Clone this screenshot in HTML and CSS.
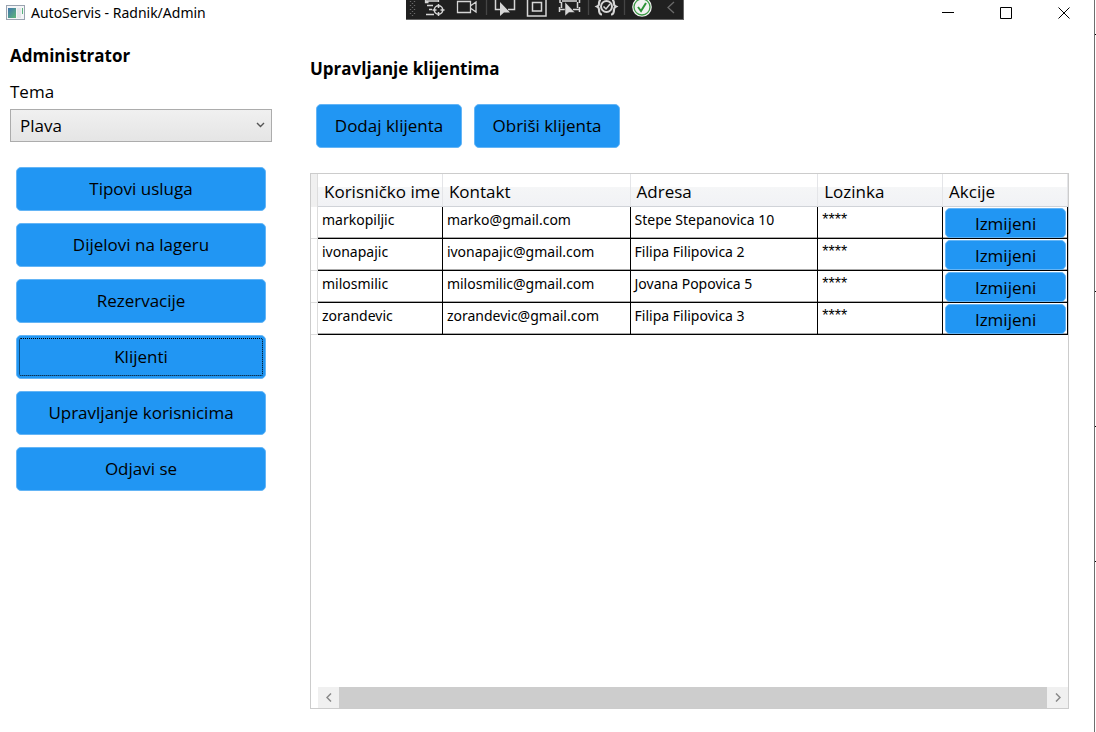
FILE: index.html
```html
<!DOCTYPE html>
<html lang="bs">
<head>
<meta charset="utf-8">
<meta name="viewport" content="width=device-width, initial-scale=1">
<title>AutoServis - Radnik/Admin</title>
<link rel="stylesheet" href="styles.css">
</head>
<body>
<div class="window">
  <header class="titlebar">
    <svg class="app-icon" width="19" height="15" viewBox="0 0 19 15" aria-hidden="true">
      <defs><linearGradient id="pane" x1="0" y1="0" x2="1" y2="1"><stop offset="0" stop-color="#3f74ae"/><stop offset="1" stop-color="#5fb878"/></linearGradient></defs>
      <rect x=".5" y=".5" width="18" height="14" fill="#f4f5f7" stroke="#9aa3b0"/>
      <rect x="2" y="3" width="8" height="10" fill="url(#pane)"/>
      <rect x="11" y="3" width="4" height="10" fill="#e4e6ea"/>
      <rect x="16" y="3" width="1" height="6" fill="#58b47c"/>
    </svg>
    <h1 class="app-title">AutoServis - Radnik/Admin</h1>
    <div class="window-buttons">
      <button type="button" aria-label="Minimiziraj"><svg width="12" height="12" viewBox="0 0 12 12"><path d="M0 5.500h12"/></svg></button>
      <button type="button" aria-label="Maksimiziraj"><svg width="12" height="12" viewBox="0 0 12 12"><path d="M.5.500h11v11H.5z"/></svg></button>
      <button type="button" aria-label="Zatvori"><svg width="12" height="12" viewBox="0 0 12 12"><path d="M.5.500l11 11M11.500.500l-11 11"/></svg></button>
    </div>
  </header>

  <div class="debug-bar" aria-hidden="true">
    <svg width="277" height="19" viewBox="0 0 277 19" fill="none" stroke="#d6d6d6" stroke-width="1.300">
      <path d="M4.500 1v16M8.500 1v16" stroke="#6a6a6a" stroke-dasharray="1 3"/>
      <path d="M6.500 3v14" stroke="#6a6a6a" stroke-dasharray="1 3"/>
      <path d="M19.500 0v2.500h3M19.500 1h13M21 5.500h6M23 9.500h3M20 14.500h8M32.500 0v2"/>
      <circle cx="32.500" cy="10" r="4.200" stroke-width="1.500"/><path d="M32.500 4v4M32.500 12v4M26.500 10h4M34.500 10h4" stroke-width="1.500"/>
      <path d="M51.500 1.500h13v11h-13zM65 5.500l5-3.500v10l-5-3.500"/>
      <path d="M80.500 0v15M182.500 0v15M218.500 0v15" stroke="#454545"/>
      <path d="M94 9.500h-4.500V0M102 9.500h6.500V0" stroke-width="1.500"/>
      <path d="M94 2v14l4-3.500h6z" fill="#d6d6d6" stroke="none"/>
      <path d="M121.500 -2h18.500v18h-18.500zM126.500 2.500h9v8.500h-9z" stroke-width="1.500"/>
      <path d="M156 1h15M154 0v3M173.500 0v3M155.500 2v6M171.500 2v6M153 9.500h6M153.500 7v5M167 9.500h7M173.500 7v5" stroke-width="1.500"/>
      <path d="M159 2v14l4-3.500h6z" fill="#d6d6d6" stroke="#202020" stroke-width=".5"/>
      <circle cx="200.500" cy="6.500" r="5.500" stroke-width="2"/>
      <path d="M197.500 6.500l2.500 2.500 4-5" stroke-width="1.500"/>
      <path d="M195 0c-2 0-2 2-2 4s-1 2-2 2.500c1 .5 2 1 2 3 0 3 1 5 3 5M206 0c2 0 2 2 2 4s1 2 2 2.500c-1 .5-2 1-2 3 0 3-1 5-3 5" stroke-width="2.200"/>
      <circle cx="236" cy="7" r="9.800" fill="#f2f2f2" stroke="none"/>
      <circle cx="236" cy="7" r="8" stroke="#3c9b45" stroke-width="1.300"/>
      <path d="M232 7l3 4 5-8" stroke="#2d9237" stroke-width="2"/>
      <path d="M268 2l-6 5.500 6 5.500" stroke="#6a6a6a"/>
    </svg>
  </div>

  <div class="content">
    <aside class="sidebar">
      <h2 class="heading">Administrator</h2>
      <label class="theme-label" for="theme">Tema</label>
      <div class="select-box">
        <select id="theme"><option>Plava</option></select>
        <svg class="chevron" width="9" height="6" viewBox="0 0 9 6" aria-hidden="true"><path d="M1 1l3.500 3.500L8 1"/></svg>
      </div>
      <nav class="menu">
        <button type="button" class="btn">Tipovi usluga</button>
        <button type="button" class="btn">Dijelovi na lageru</button>
        <button type="button" class="btn">Rezervacije</button>
        <button type="button" class="btn current">Klijenti</button>
        <button type="button" class="btn">Upravljanje korisnicima</button>
        <button type="button" class="btn">Odjavi se</button>
      </nav>
    </aside>

    <main class="main">
      <h2 class="heading">Upravljanje klijentima</h2>
      <div class="actions">
        <button type="button" class="btn">Dodaj klijenta</button>
        <button type="button" class="btn">Obriši klijenta</button>
      </div>
      <section class="grid">
        <table class="clients">
          <colgroup><col class="c-handle"><col class="c-short"><col class="c-long"><col class="c-long"><col class="c-short"><col class="c-short"></colgroup>
          <thead>
            <tr><td class="handle"></td><th scope="col">Korisničko ime</th><th scope="col">Kontakt</th><th scope="col">Adresa</th><th scope="col">Lozinka</th><th scope="col">Akcije</th></tr>
          </thead>
          <tbody>
            <tr><td class="handle"></td><td>markopiljic</td><td>marko@gmail.com</td><td>Stepe Stepanovica 10</td><td class="secret">****</td><td class="action"><button type="button" class="btn edit">Izmijeni</button></td></tr>
            <tr><td class="handle"></td><td>ivonapajic</td><td>ivonapajic@gmail.com</td><td>Filipa Filipovica 2</td><td class="secret">****</td><td class="action"><button type="button" class="btn edit">Izmijeni</button></td></tr>
            <tr><td class="handle"></td><td>milosmilic</td><td>milosmilic@gmail.com</td><td>Jovana Popovica 5</td><td class="secret">****</td><td class="action"><button type="button" class="btn edit">Izmijeni</button></td></tr>
            <tr><td class="handle"></td><td>zorandevic</td><td>zorandevic@gmail.com</td><td>Filipa Filipovica 3</td><td class="secret">****</td><td class="action"><button type="button" class="btn edit">Izmijeni</button></td></tr>
          </tbody>
        </table>
        <div class="scrollbar">
          <button type="button" aria-label="Lijevo"><svg width="6" height="9" viewBox="0 0 6 9"><path d="M5 .5l-4 4 4 4"/></svg></button>
          <div class="thumb"></div>
          <button type="button" aria-label="Desno"><svg width="6" height="9" viewBox="0 0 6 9"><path d="M1 .5l4 4-4 4"/></svg></button>
        </div>
      </section>
    </main>
  </div>
</div>
</body>
</html>
```
FILE: styles.css
```css
* { box-sizing: border-box; }

body {
  margin: 0;
  padding-right: 1px;
  background:
    linear-gradient(#000, #000) right 34px / 1px 1px no-repeat,
    linear-gradient(#000, #000) right 291px / 1px 1px no-repeat,
    linear-gradient(#000, #000) right 426px / 1px 1px no-repeat,
    linear-gradient(#000, #000) right 561px / 1px 1px no-repeat,
    #fff;
  color: #000;
  font-family: "Open Sans", "Noto Sans", sans-serif;
  font-size: 17px;
  line-height: 24px;
}

button, select { font: inherit; color: inherit; margin: 0; }

.window {
  position: relative;
  display: flex;
  flex-direction: column;
  min-height: 100vh;
  border-right: 1px solid #6e6e6e;
}

.titlebar {
  display: flex;
  align-items: center;
  height: 25px;
  padding-left: 6px;
  gap: 6px;
}
.app-title { margin: 0; font-family: "Noto Sans", sans-serif; font-size: 14px; line-height: 20px; font-weight: 400; }
.window-buttons { display: flex; margin-left: auto; gap: 12px; padding-right: 7px; }
.window-buttons button {
  display: grid;
  place-items: center;
  width: 46px;
  height: 25px;
  padding: 0;
  border: 0;
  background: none;
}
.window-buttons svg { fill: none; stroke: #000; }

/* debug toolbar floats over the title bar */
.debug-bar {
  position: absolute;
  top: 0;
  left: 406px;
  background: #202020;
  border: solid #666;
  border-width: 0 1px 1px 0;
}
.debug-bar svg { display: block; }

.content { flex: 1; display: flex; gap: 38px; padding: 19px 25px 23px 10px; }

.sidebar { width: 262px; flex: none; }
.heading { margin: 0; font-size: 17px; line-height: 24px; font-weight: 700; }
.theme-label { display: block; margin-top: 12px; font-weight: 500; }
.select-box { position: relative; margin-top: 5px; }
.select-box select {
  display: block;
  appearance: none;
  width: 100%;
  height: 33px;
  padding: 0 9px;
  border: 1px solid #acacac;
  border-radius: 0;
  background: linear-gradient(#f0f0f0, #e5e5e5);
}
.chevron { position: absolute; right: 7px; top: 13px; fill: none; stroke: #555; stroke-width: 1.4; }

.menu { display: flex; flex-direction: column; gap: 12px; padding: 25px 6px 0; }
.btn {
  height: 44px;
  padding: 0 20px;
  border: 1px solid #64b5f6;
  border-radius: 5px;
  background: #2196f3;
  white-space: nowrap;
}
.current { outline: 1px dotted #000; outline-offset: -4px; }

.main { flex: 1; min-width: 0; display: flex; flex-direction: column; padding-top: 13px; }
.actions { display: flex; gap: 12px; padding: 23px 6px 25px; }
.actions .btn { width: 146px; padding: 0; }

.grid { flex: 1; display: flex; flex-direction: column; border: 1px solid #ccc; }
.clients { width: 100%; table-layout: fixed; border-collapse: separate; border-spacing: 0; }
.c-handle { width: 7px; }
.c-short { width: 16.5%; }
.clients th {
  height: 33px;
  padding: 4px 6px 0;
  text-align: left;
  font-weight: 400;
  white-space: nowrap;
  background: linear-gradient(#fff 40%, #f5f6f7 40%, #f1f2f5);
  border-right: 1px solid #e4e5e8;
  border-bottom: 1px solid #d0d3d8;
}
.clients tbody td {
  height: 32px;
  padding: 3px 4px 0;
  vertical-align: top;
  font-family: "Noto Sans", sans-serif;
  font-size: 14px;
  line-height: 20px;
  border-right: 1px solid #000;
  border-bottom: 1px solid #000;
  box-shadow: inset 0 -1px #aaa;
}
.clients .handle, .clients tbody .handle { padding: 0; background: #f0f0f0; border-right: 1px solid #ddd; box-shadow: none; }
.clients tbody .handle { background: #fff; border-bottom: 1px solid #ddd; }
.clients tbody .secret { font-family: "Liberation Sans", sans-serif; font-size: 16px; }
.clients tbody .action { padding: 1px 1px 0 2px; }
.btn.edit { display: block; width: 100%; height: 30px; padding: 2px 0 0; font-family: "Open Sans", "Noto Sans", sans-serif; font-size: 17px; line-height: 24px; }

.scrollbar { display: flex; margin-top: auto; margin-left: 7px; height: 21px; background: #f0f0f0; }
.scrollbar button { display: grid; place-items: center; width: 21px; padding: 0; border: 0; background: #f0f0f0; }
.scrollbar svg { fill: none; stroke: #888; stroke-width: 1.5; }
.thumb { flex: 1; background: #cdcdcd; }
```
